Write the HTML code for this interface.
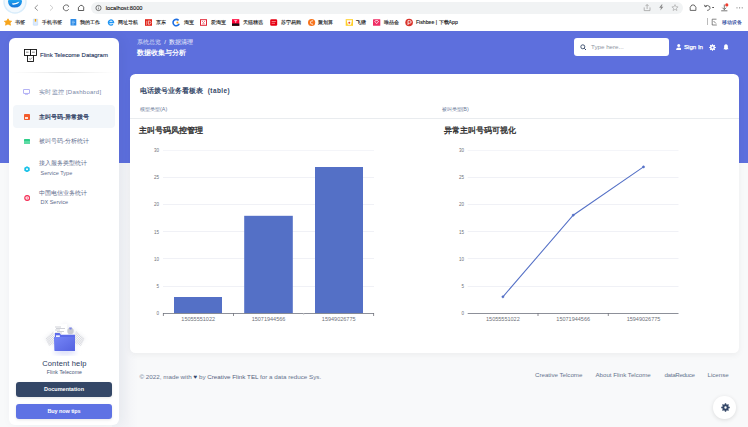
<!DOCTYPE html>
<html><head><meta charset="utf-8">
<style>
*{margin:0;padding:0;box-sizing:border-box}
html,body{width:748px;height:427px;overflow:hidden;background:#f8f9fa;font-family:"Liberation Sans",sans-serif;position:relative}
.a{position:absolute;white-space:nowrap}
#chrome{left:0;top:0;width:748px;height:31px;background:#fff}
#addr{left:91px;top:2px;width:592px;height:12px;background:#f1f3f4;border-radius:6px}
.bm{font-size:5.2px;color:#1a1a1a;top:19.3px;line-height:6px;-webkit-text-stroke:0.12px #1a1a1a}
.ic{top:18px;width:6px;height:7px;border-radius:1px}
#blue{left:0;top:31px;width:748px;height:132px;background:#5d6fdd}
#side{left:9px;top:38px;width:110px;height:387px;background:#fff;border-radius:6px;box-shadow:3px 0 12px rgba(40,50,80,.06)}
#card{left:130px;top:74px;width:609px;height:278.5px;background:#fff;border-radius:5.5px;box-shadow:0 2px 6px rgba(0,0,0,.05)}
.nav{font-size:6px;line-height:7px;color:#5f6e8e}
.grid{height:1px;background:#e8ebf2}
</style></head><body>
<div id="chrome" class="a">
  <!-- browser logo -->
  <svg class="a" style="left:0;top:0" width="30" height="16" viewBox="0 0 30 16">
    <defs><radialGradient id="gl" cx="0.5" cy="0.3" r="0.5"><stop offset="0.5" stop-color="#d8ecfb"/><stop offset="1" stop-color="#fff" stop-opacity="0"/></radialGradient>
    <linearGradient id="lg" x1="0" y1="0" x2="0" y2="1"><stop offset="0" stop-color="#22b0f5"/><stop offset="1" stop-color="#1572d8"/></linearGradient></defs>
    <circle cx="15" cy="2" r="11" fill="#f3f9fe" stroke="#d9edfb" stroke-width="1.4"/>
    <path d="M8 1.5 Q8 -2 15 -2 Q22 -2 22 1.5 Q21.5 7.6 14.5 7.6 Q8.5 7.6 8 1.5 Z" fill="url(#lg)"/>
    <path d="M11.8 3.6 Q15.5 3.4 19.5 1.6 Q18 5 12.5 4.6 Z" fill="#fff"/>
  </svg>
  <svg class="a" style="left:28px;top:0" width="64" height="16" viewBox="28 0 64 16">
    <path d="M37.8 5 L34.8 7.8 L37.8 10.6" stroke="#777" stroke-width="0.8" fill="none"/>
    <path d="M50 5 L53 7.8 L50 10.6" stroke="#c4c4c4" stroke-width="0.8" fill="none"/>
    <path d="M68.6 6.2 A2.9 2.9 0 1 0 68.7 9.3" stroke="#444" stroke-width="0.8" fill="none"/>
    <path d="M67.6 5.3 L68.8 6.3 L67.8 7.3" stroke="#444" stroke-width="0.6" fill="none"/>
    <path d="M78.4 10.5 V7.4 L80.6 5.4 H82.2 L83.7 7.2 V10.5 Z" stroke="#333" stroke-width="0.8" fill="none" stroke-linejoin="round"/>
  </svg>
  <div id="addr" class="a"></div>
  <svg class="a" style="left:95px;top:4px" width="8" height="8"><circle cx="3.5" cy="4" r="2.6" stroke="#555" stroke-width="0.8" fill="none"/><path d="M3.5 3.5 V5.4" stroke="#555" stroke-width="0.6"/><circle cx="3.5" cy="2.6" r="0.35" fill="#555"/></svg>
  <div class="a" style="left:105.8px;top:4px;font-size:5.7px;color:#111;line-height:8px;-webkit-text-stroke:0.1px #111">localhost:8000</div>
  <svg class="a" style="left:640px;top:0" width="108" height="16" viewBox="640 0 108 16">
    <path d="M644.2 7.4 V10.6 H650 V7.4 M647.1 9 V4.6 M645.5 6.1 L647.1 4.5 L648.7 6.1" stroke="#9a9a9a" stroke-width="0.7" fill="none"/>
    <path d="M661.6 4.4 L659.2 7.8 H661 L660.3 10.6 L663.4 6.7 H661.5 L662.6 4.4 Z" fill="#8a8a8a"/>
    <path d="M675 4.6 L675.9 6.7 L678.1 6.9 L676.4 8.3 L676.9 10.5 L675 9.3 L673.1 10.5 L673.6 8.3 L671.9 6.9 L674.1 6.7 Z" stroke="#a0a0a0" stroke-width="0.6" fill="none" stroke-linejoin="round"/>
    <path d="M690.2 10.4 V7.3 L691.8 5 H694.2 L695.9 7.3 V10.4 Z" stroke="#444" stroke-width="0.8" fill="none" stroke-linejoin="round"/>
    <path d="M705 6.2 Q707.5 4.5 709.8 6.6 Q710.8 8.6 708.6 10.2 L707.2 10.4" stroke="#444" stroke-width="0.8" fill="none"/>
    <path d="M704.3 4.8 L705 6.8 L707 6.1" stroke="#444" stroke-width="0.7" fill="none"/>
    <rect x="712.2" y="7.1" width="1.8" height="0.9" fill="#444"/>
    <path d="M724.3 4.5 V9.6 M722.4 7.7 L724.3 9.6 L726.2 7.7 M721.2 10.8 H727.4" stroke="#555" stroke-width="0.8" fill="none"/>
    <circle cx="726.8" cy="4.9" r="1.6" fill="#f03c2e"/>
    <circle cx="737" cy="7.8" r="0.6" fill="#777"/><circle cx="739.6" cy="7.8" r="0.6" fill="#777"/><circle cx="742.2" cy="7.8" r="0.6" fill="#777"/>
  </svg>
  <!-- bookmarks -->
  <svg class="a" style="left:0;top:17px" width="420" height="10" viewBox="0 17 420 10">
    <path d="M8 18.8 L9.3 21 L11.6 21.2 L10 22.9 L10.5 25.2 L8 24 L5.5 25.2 L6 22.9 L4.4 21.2 L6.7 21 Z" fill="#f7a51c" stroke="#f7a51c" stroke-width="0.8" stroke-linejoin="round"/>
    <rect x="33.3" y="19" width="4.4" height="6.3" rx="0.5" fill="#dbeafc" stroke="#a9cbf5" stroke-width="0.4"/>
    <rect x="34.8" y="19" width="1.4" height="2.6" fill="#f5a000"/>
    <rect x="70.5" y="19" width="5.8" height="6.6" rx="0.6" fill="#2b8ae6"/>
    <path d="M71.8 21.2 H74.5 M71.8 22.6 H75 M71.8 24 H74" stroke="#dff0ff" stroke-width="0.5"/>
    <path d="M108.6 22.5 H113.6 A2.6 2.6 0 1 0 112.9 24.3" stroke="#2196f3" stroke-width="1.3" fill="none"/>
    <rect x="145" y="19.2" width="7" height="6.6" fill="#e1251b"/>
    <path d="M146.8 20.8 V23.6 Q146.8 24.5 146 24.4 M148.5 20.8 V24.4 Q151 24.4 151 22.6 Q151 20.8 148.5 20.8" stroke="#fff" stroke-width="0.6" fill="none"/>
    <path d="M178.6 20.4 A3.2 3.2 0 1 0 179.2 23.8" stroke="#1f6fe0" stroke-width="1.6" fill="none"/>
    <circle cx="177.4" cy="22.6" r="1" fill="#f3a417"/>
    <rect x="200" y="19.2" width="7" height="6.6" fill="#e02636"/>
    <rect x="201" y="20.2" width="5" height="4.6" fill="#fff"/>
    <path d="M202 21 L203.5 22.6 L205 21 M202.2 23.8 H204.8" stroke="#e02636" stroke-width="0.6" fill="none"/>
    <rect x="232" y="19.2" width="7.3" height="6.6" fill="#ff0036"/>
    <rect x="232" y="23.5" width="7.3" height="2.3" fill="#111"/>
    <path d="M234.2 20.6 H237.2 M235.7 20.6 V22.8" stroke="#fff" stroke-width="0.7"/>
    <rect x="270.2" y="19.2" width="7" height="6.6" rx="1.3" fill="#e60012"/>
    <path d="M271.6 21.5 H275.8 M271.6 23.3 H275" stroke="#ffd0d0" stroke-width="0.6"/>
    <circle cx="311.6" cy="22.5" r="3.6" fill="#f7741c"/>
    <path d="M313 21 A1.7 1.7 0 1 0 313 24" stroke="#fff" stroke-width="0.9" fill="none"/>
    <rect x="345.7" y="19.2" width="7.3" height="6.6" fill="#ffcf26"/>
    <path d="M346.6 20.2 H352 L351 24.8 H347.8 Z" fill="#fff"/>
    <circle cx="349.3" cy="22.8" r="1" fill="#e8483b"/>
    <rect x="373" y="19.2" width="7.3" height="6.6" rx="0.5" fill="#f02d64"/>
    <path d="M374.5 21 L376.6 23.8 L378.8 21 M375.2 20.6 H378" stroke="#fff" stroke-width="0.7" fill="none"/>
    <circle cx="409.1" cy="22.5" r="3.8" fill="#d9332b"/>
    <path d="M408 25 V20.6 H409.6 Q411.2 20.6 411.2 22 Q411.2 23.3 409.6 23.3 H408" stroke="#fff" stroke-width="0.8" fill="none"/>
  </svg>
  <div class="a bm" style="left:15px">书签</div>
  <div class="a bm" style="left:42px">手机书签</div>
  <div class="a bm" style="left:80.3px">我的工作</div>
  <div class="a bm" style="left:117.6px">网址导航</div>
  <div class="a bm" style="left:156px">京东</div>
  <div class="a bm" style="left:184.2px">淘宝</div>
  <div class="a bm" style="left:210.8px">爱淘宝</div>
  <div class="a bm" style="left:243.2px">天猫精选</div>
  <div class="a bm" style="left:280.6px">苏宁易购</div>
  <div class="a bm" style="left:318px">聚划算</div>
  <div class="a bm" style="left:356.2px">飞猪</div>
  <div class="a bm" style="left:384px">唯品会</div>
  <div class="a bm" style="left:415.9px">Fishbee | 下载App</div>
  <div class="a" style="left:706.5px;top:18px;width:0.8px;height:7px;background:#bbb"></div>
  <svg class="a" style="left:711px;top:18px" width="7" height="8" viewBox="0 0 7 8"><path d="M1.2 1.2 H5.5 M1.2 1.2 V7 H5.8 M2.5 3 L5 5.5" stroke="#555" stroke-width="0.7" fill="none"/></svg>
  <div class="a bm" style="left:722px;color:#1f3f9a;-webkit-text-stroke:0.12px #1f3f9a">移动设备</div>
</div>

<div id="blue" class="a"></div>
<div class="a" style="left:112px;top:163px;width:26px;height:264px;background:linear-gradient(90deg,#f2f4f7,#f3f4f7 60%,rgba(248,249,250,0))"></div>

<!-- header nav -->
<div class="a" style="left:137px;top:39px;font-size:6px;line-height:7px;color:rgba(255,255,255,.8)">系统总览 <span style="color:#fff">&nbsp;/&nbsp; 数据清理</span></div>
<div class="a" style="left:137px;top:49px;font-size:7px;line-height:8px;color:#fff;font-weight:bold">数据收集与分析</div>

<div class="a" style="left:574px;top:38px;width:95px;height:18px;background:#fff;border-radius:3px"></div>
<svg class="a" style="left:580px;top:44px" width="7" height="7" viewBox="0 0 7 7"><circle cx="2.8" cy="2.8" r="2" stroke="#344767" stroke-width="0.9" fill="none"/><path d="M4.3 4.3 L6 6" stroke="#344767" stroke-width="1"/></svg>
<div class="a" style="left:591px;top:43px;font-size:6.2px;line-height:8px;color:#8f96a3">Type here...</div>
<svg class="a" style="left:675.8px;top:43.8px" width="5.5" height="6" viewBox="0 0 5.5 6"><circle cx="2.75" cy="1.6" r="1.5" fill="#fff"/><path d="M0.2 6 V4.9 Q0.4 3.4 2.75 3.4 Q5.1 3.4 5.3 4.9 V6 Z" fill="#fff"/></svg>
<div class="a" style="left:684px;top:43px;font-size:6.1px;line-height:8px;color:#fff;-webkit-text-stroke:0.25px #fff">Sign In</div>
<svg class="a" style="left:709.2px;top:43.6px" width="7" height="7" viewBox="0 0 24 24"><path fill="#fff" fill-rule="evenodd" d="M23.36 10.20 L23.36 13.80 L20.36 14.01 L19.33 16.49 L21.30 18.76 L18.76 21.30 L16.49 19.33 L14.01 20.36 L13.80 23.36 L10.20 23.36 L9.99 20.36 L7.51 19.33 L5.24 21.30 L2.70 18.76 L4.67 16.49 L3.64 14.01 L0.64 13.80 L0.64 10.20 L3.64 9.99 L4.67 7.51 L2.70 5.24 L5.24 2.70 L7.51 4.67 L9.99 3.64 L10.20 0.64 L13.80 0.64 L14.01 3.64 L16.49 4.67 L18.76 2.70 L21.30 5.24 L19.33 7.51 L20.36 9.99 Z M12 8.8 A3.2 3.2 0 1 0 12 15.2 A3.2 3.2 0 1 0 12 8.8 Z"/></svg>
<svg class="a" style="left:722.6px;top:43.8px" width="6" height="6.6" viewBox="0 0 14 16"><path fill="#fff" d="M7 0.5 C3.5 0.5 2.5 3.5 2.5 6 V10 L0.8 12.5 H13.2 L11.5 10 V6 C11.5 3.5 10.5 0.5 7 0.5 Z M5 13.5 H9 A2 2 0 0 1 5 13.5 Z"/></svg>

<!-- sidebar -->
<div id="side" class="a"></div>
<svg class="a" style="left:24px;top:49px" width="13" height="13" viewBox="0 0 13 13">
  <rect x="0.5" y="0.5" width="6" height="6" stroke="#111" stroke-width="0.9" fill="#fff"/>
  <rect x="6.5" y="0.5" width="6" height="6" stroke="#111" stroke-width="0.9" fill="#fff"/>
  <rect x="3.5" y="6.5" width="6" height="6" stroke="#111" stroke-width="0.9" fill="#fff"/>
  <path d="M2 3.2 H4.5 M8 3.2 H10.8 M5.2 9.6 L6.3 10.5 L8 8.6" stroke="#333" stroke-width="0.6" fill="none"/>
</svg>
<div class="a" style="left:40px;top:51px;font-size:6px;line-height:8px;color:#22325a;-webkit-text-stroke:0.1px #22325a">Flink Telecome Datagram</div>
<div class="a" style="left:13px;top:72px;width:102px;height:1px;background:linear-gradient(90deg,rgba(0,0,0,0),rgba(0,0,0,.1),rgba(0,0,0,0))"></div>

<svg class="a" style="left:23px;top:89px" width="7" height="6" viewBox="0 0 7 6"><rect x="0.45" y="0.45" width="6.1" height="4" rx="0.4" stroke="#9d9bf3" stroke-width="0.8" fill="none"/><rect x="2" y="5.1" width="3" height="0.7" fill="#b3b1f5"/></svg>
<div class="a nav" style="left:39px;top:88.5px;color:#7887a6;letter-spacing:0.25px">实时监控 [Dashboard]</div>

<div class="a" style="left:13px;top:105px;width:102px;height:23px;background:#f2f6fa;border-radius:4px"></div>
<div class="a" style="left:23.8px;top:114px;width:6.2px;height:6px;background:#f35b2c;border-radius:0.8px"><div style="position:absolute;left:1px;top:2.6px;width:3.6px;height:2.2px;background:#ffe3d6"></div></div>
<div class="a nav" style="left:39px;top:113.5px;color:#24345a;-webkit-text-stroke:0.22px #24345a">主叫号码-异常拨号</div>

<div class="a" style="left:24px;top:138.8px;width:6px;height:5px;background:#2dce89;border-radius:0.5px"><div style="margin-top:1.8px;height:0.9px;background:#fff"></div><div style="height:2.3px;background:#5ddba4"></div></div>
<div class="a nav" style="left:39px;top:138px">被叫号码-分析统计</div>

<svg class="a" style="left:23.5px;top:165.5px" width="6" height="6.5" viewBox="0 0 6 6.5"><path d="M3 0.2 L5.7 1.7 V4.8 L3 6.3 L0.3 4.8 V1.7 Z" fill="#17c1e8"/><circle cx="3" cy="3.2" r="1" fill="#fff"/></svg>
<div class="a nav" style="left:39px;top:160px">接入服务类型统计</div>
<div class="a nav" style="left:40.5px;top:170px;font-size:5.5px">Service Type</div>

<svg class="a" style="left:23.8px;top:195px" width="6.4" height="6" viewBox="0 0 6.4 6"><circle cx="3.2" cy="3" r="2.4" stroke="#f5365c" stroke-width="1.3" fill="#fff"/><path d="M2.4 2.2 Q3.2 1.6 3.8 2.3 Q2.5 3 3.9 3.8 Q3.2 4.4 2.4 3.8" stroke="#f5365c" stroke-width="0.5" fill="none"/></svg>
<div class="a nav" style="left:39px;top:190px">中国电信业务统计</div>
<div class="a nav" style="left:40.5px;top:198.5px;color:#5a6a8a;font-size:5.5px">DX Service</div>

<!-- illustration -->
<svg class="a" style="left:40px;top:320px" width="50" height="36" viewBox="0 0 50 36">
  <defs>
    <linearGradient id="fg" x1="0" y1="0" x2="1" y2="1"><stop offset="0" stop-color="#7585f7"/><stop offset="1" stop-color="#5563e0"/></linearGradient>
    <pattern id="gp" width="1.6" height="1.6" patternUnits="userSpaceOnUse" patternTransform="rotate(45)"><rect width="1.6" height="1.6" fill="#fff"/><path d="M0 0 H1.6 M0 0 V1.6" stroke="#a4a8b6" stroke-width="0.45"/></pattern>
    <filter id="bl" x="-50%" y="-50%" width="200%" height="200%"><feGaussianBlur stdDeviation="2"/></filter>
  </defs>
  <path d="M25 3 L46 19 L25 34 L4 19 Z" fill="#e9ebf0" filter="url(#bl)" opacity="0.7"/>
  <ellipse cx="25" cy="32" rx="12" ry="3" fill="#dfe2fb" filter="url(#bl)"/>
  <path d="M5.5 18.5 L14 11 L17 22 L9 26 Z" fill="url(#gp)"/>
  <path d="M44.5 18.5 L36 11 L33 22 L41 26 Z" fill="url(#gp)"/>
  <path d="M13 5 L27 4 L28 17 L14 18 Z" fill="#fff"/>
  <path d="M15 7 H21 M16 8.5 H25 M15 10 H20 M17 11.5 H24 M15 13 H22" stroke="#b0b4be" stroke-width="0.6"/>
  <circle cx="30.5" cy="11" r="3.2" fill="#c8cad2"/>
  <path d="M29 7.6 H32 L31.3 9.5 H29.7 Z" fill="#7d86e8"/>
  <path d="M14.8 13 H19.5 L21 14.8 H35 V31 H14.8 Z" fill="#5c6bea"/>
  <rect x="16" y="15.3" width="3.8" height="3.2" fill="#f2f3fb"/>
  <path d="M13.9 17 H34.6 L34.6 30.8 H14.5 Z" fill="url(#fg)"/>
</svg>
<div class="a" style="left:42.2px;top:358.6px;font-size:7.5px;line-height:9px;color:#2b3a5c;letter-spacing:0.15px">Content help</div>
<div class="a" style="left:46.8px;top:368.5px;font-size:5.2px;line-height:7px;color:#4a5878;letter-spacing:0.05px">Flink Telecome</div>
<div class="a" style="left:16px;top:382px;width:96px;height:15px;background:#344767;border-radius:3px;box-shadow:0 1px 3px rgba(0,0,0,.1)"></div>
<div class="a" style="left:16px;top:385px;width:96px;text-align:center;font-size:5.5px;line-height:8px;color:#fff;font-weight:bold">Documentation</div>
<div class="a" style="left:16px;top:404px;width:96px;height:15px;background:#5e72e4;border-radius:3px;box-shadow:0 1px 3px rgba(0,0,0,.1)"></div>
<div class="a" style="left:16px;top:407px;width:96px;text-align:center;font-size:5.5px;line-height:8px;color:#fff;font-weight:bold;letter-spacing:-0.1px">Buy now tips</div>

<!-- main card -->
<div id="card" class="a"></div>
<div class="a" style="left:140px;top:86px;font-size:7px;line-height:9px;color:#344767;font-weight:bold">电话拨号业务看板表 <span style="letter-spacing:0.45px;margin-left:2.8px;font-size:6.4px">(table)</span></div>
<div class="a" style="left:140px;top:106px;font-size:5.4px;line-height:7px;color:#6b7a98">模型类型(A)</div>
<div class="a" style="left:441.5px;top:106px;font-size:5.4px;line-height:7px;color:#6b7a98">被叫类型(B)</div>
<div class="a" style="left:130px;top:118px;width:609px;height:1px;background:#e9ecef"></div>
<div class="a" style="left:139px;top:125.5px;font-size:8px;line-height:9px;color:#333;-webkit-text-stroke:0.35px #333">主叫号码风控管理</div>
<div class="a" style="left:443.5px;top:125.5px;font-size:8px;line-height:9px;color:#333;-webkit-text-stroke:0.35px #333">异常主叫号码可视化</div>

<!-- left chart -->
<svg class="a" style="left:130px;top:140px" width="300" height="190" viewBox="130 140 300 190">
  <g stroke="#eceef4" stroke-width="0.8">
    <line x1="163" y1="150.5" x2="374" y2="150.5" stroke="#f1f3f7"/>
    <line x1="163" y1="177.5" x2="374" y2="177.5"/>
    <line x1="163" y1="204.5" x2="374" y2="204.5"/>
    <line x1="163" y1="231.5" x2="374" y2="231.5"/>
    <line x1="163" y1="258.5" x2="374" y2="258.5"/>
    <line x1="163" y1="286.5" x2="374" y2="286.5"/>
  </g>
  <rect x="174" y="297" width="48" height="16.5" fill="#5470c6"/>
  <rect x="244.2" y="215.8" width="48.6" height="97.7" fill="#5470c6"/>
  <rect x="315" y="167" width="48" height="146.5" fill="#5470c6"/>
  <line x1="163" y1="313.5" x2="374" y2="313.5" stroke="#80838d" stroke-width="0.9"/>
  <g stroke="#6e7079" stroke-width="0.8"><line x1="163.4" y1="313" x2="163.4" y2="316"/><line x1="233.5" y1="313" x2="233.5" y2="316"/><line x1="303.7" y1="313" x2="303.7" y2="315" stroke="#c8c9cc"/><line x1="373.6" y1="313" x2="373.6" y2="316"/></g>
  <g font-size="4.5" fill="#6e7079" text-anchor="end" font-family="Liberation Sans">
    <text x="159" y="151.5">30</text><text x="159" y="179">25</text><text x="159" y="206">20</text><text x="159" y="233.5">15</text><text x="159" y="260.5">10</text><text x="159" y="288">5</text><text x="159" y="315">0</text>
  </g>
  <g font-size="5.5" fill="#6e7079" text-anchor="middle" font-family="Liberation Sans">
    <text x="198.2" y="321.2">15055551022</text><text x="268.5" y="321.2">15071944566</text><text x="338.7" y="321.2">15949026775</text>
  </g>
</svg>

<!-- right chart -->
<svg class="a" style="left:430px;top:140px" width="300" height="190" viewBox="430 140 300 190">
  <g stroke="#eceef4" stroke-width="0.8">
    <line x1="467.7" y1="150.5" x2="678.5" y2="150.5" stroke="#f1f3f7"/>
    <line x1="467.7" y1="177.5" x2="678.5" y2="177.5"/>
    <line x1="467.7" y1="204.5" x2="678.5" y2="204.5"/>
    <line x1="467.7" y1="231.5" x2="678.5" y2="231.5"/>
    <line x1="467.7" y1="258.5" x2="678.5" y2="258.5"/>
    <line x1="467.7" y1="286.5" x2="678.5" y2="286.5"/>
  </g>
  <line x1="467.7" y1="313.5" x2="678.5" y2="313.5" stroke="#80838d" stroke-width="0.9"/>
  <g stroke="#6e7079" stroke-width="0.8"><line x1="538" y1="313" x2="538" y2="316"/><line x1="608.3" y1="313" x2="608.3" y2="316"/></g>
  <polyline points="502.9,296.8 573.2,215.2 643.5,166.9" stroke="#5470c6" stroke-width="1.05" fill="none"/>
  <g fill="#5470c6" stroke="#5470c6" stroke-width="0.5"><circle cx="502.9" cy="296.8" r="1.1"/><circle cx="573.2" cy="215.2" r="1.1"/><circle cx="643.5" cy="166.9" r="1.1"/></g>
  <g font-size="4.5" fill="#6e7079" text-anchor="end" font-family="Liberation Sans">
    <text x="464" y="151.5">30</text><text x="464" y="179">25</text><text x="464" y="206">20</text><text x="464" y="233.5">15</text><text x="464" y="260.5">10</text><text x="464" y="288">5</text><text x="464" y="315">0</text>
  </g>
  <g font-size="5.5" fill="#6e7079" text-anchor="middle" font-family="Liberation Sans">
    <text x="502.9" y="321.2">15055551022</text><text x="573.2" y="321.2">15071944566</text><text x="643.5" y="321.2">15949026775</text>
  </g>
</svg>

<!-- footer -->
<div class="a" style="left:139.5px;top:372.5px;font-size:6.25px;line-height:7px;color:#67748e">© 2022, made with <span style="color:#344767">&#9829;</span> by <span style="color:#56637e">Creative Flink TEL</span> for a data reduce Sys.</div>
<div class="a" style="left:535px;top:370.8px;font-size:6.15px;line-height:7px;color:#67748e">Creative Telcome</div>
<div class="a" style="left:595.5px;top:370.8px;font-size:6.15px;line-height:7px;color:#67748e">About Flink Telcome</div>
<div class="a" style="left:664.5px;top:370.8px;font-size:6.15px;line-height:7px;color:#67748e;letter-spacing:-0.3px">dataReduce</div>
<div class="a" style="left:707.5px;top:370.8px;font-size:6.15px;line-height:7px;color:#67748e">License</div>

<div class="a" style="left:713.3px;top:396.2px;width:22.6px;height:22.6px;border-radius:50%;background:#fff;box-shadow:0 1px 4px rgba(0,0,0,.12)"></div>
<svg class="a" style="left:720.6px;top:403.2px" width="9" height="9" viewBox="0 0 24 24"><path fill="#344767" fill-rule="evenodd" d="M23.36 10.20 L23.36 13.80 L20.36 14.01 L19.33 16.49 L21.30 18.76 L18.76 21.30 L16.49 19.33 L14.01 20.36 L13.80 23.36 L10.20 23.36 L9.99 20.36 L7.51 19.33 L5.24 21.30 L2.70 18.76 L4.67 16.49 L3.64 14.01 L0.64 13.80 L0.64 10.20 L3.64 9.99 L4.67 7.51 L2.70 5.24 L5.24 2.70 L7.51 4.67 L9.99 3.64 L10.20 0.64 L13.80 0.64 L14.01 3.64 L16.49 4.67 L18.76 2.70 L21.30 5.24 L19.33 7.51 L20.36 9.99 Z M12 8.8 A3.2 3.2 0 1 0 12 15.2 A3.2 3.2 0 1 0 12 8.8 Z"/></svg>
</body></html>
